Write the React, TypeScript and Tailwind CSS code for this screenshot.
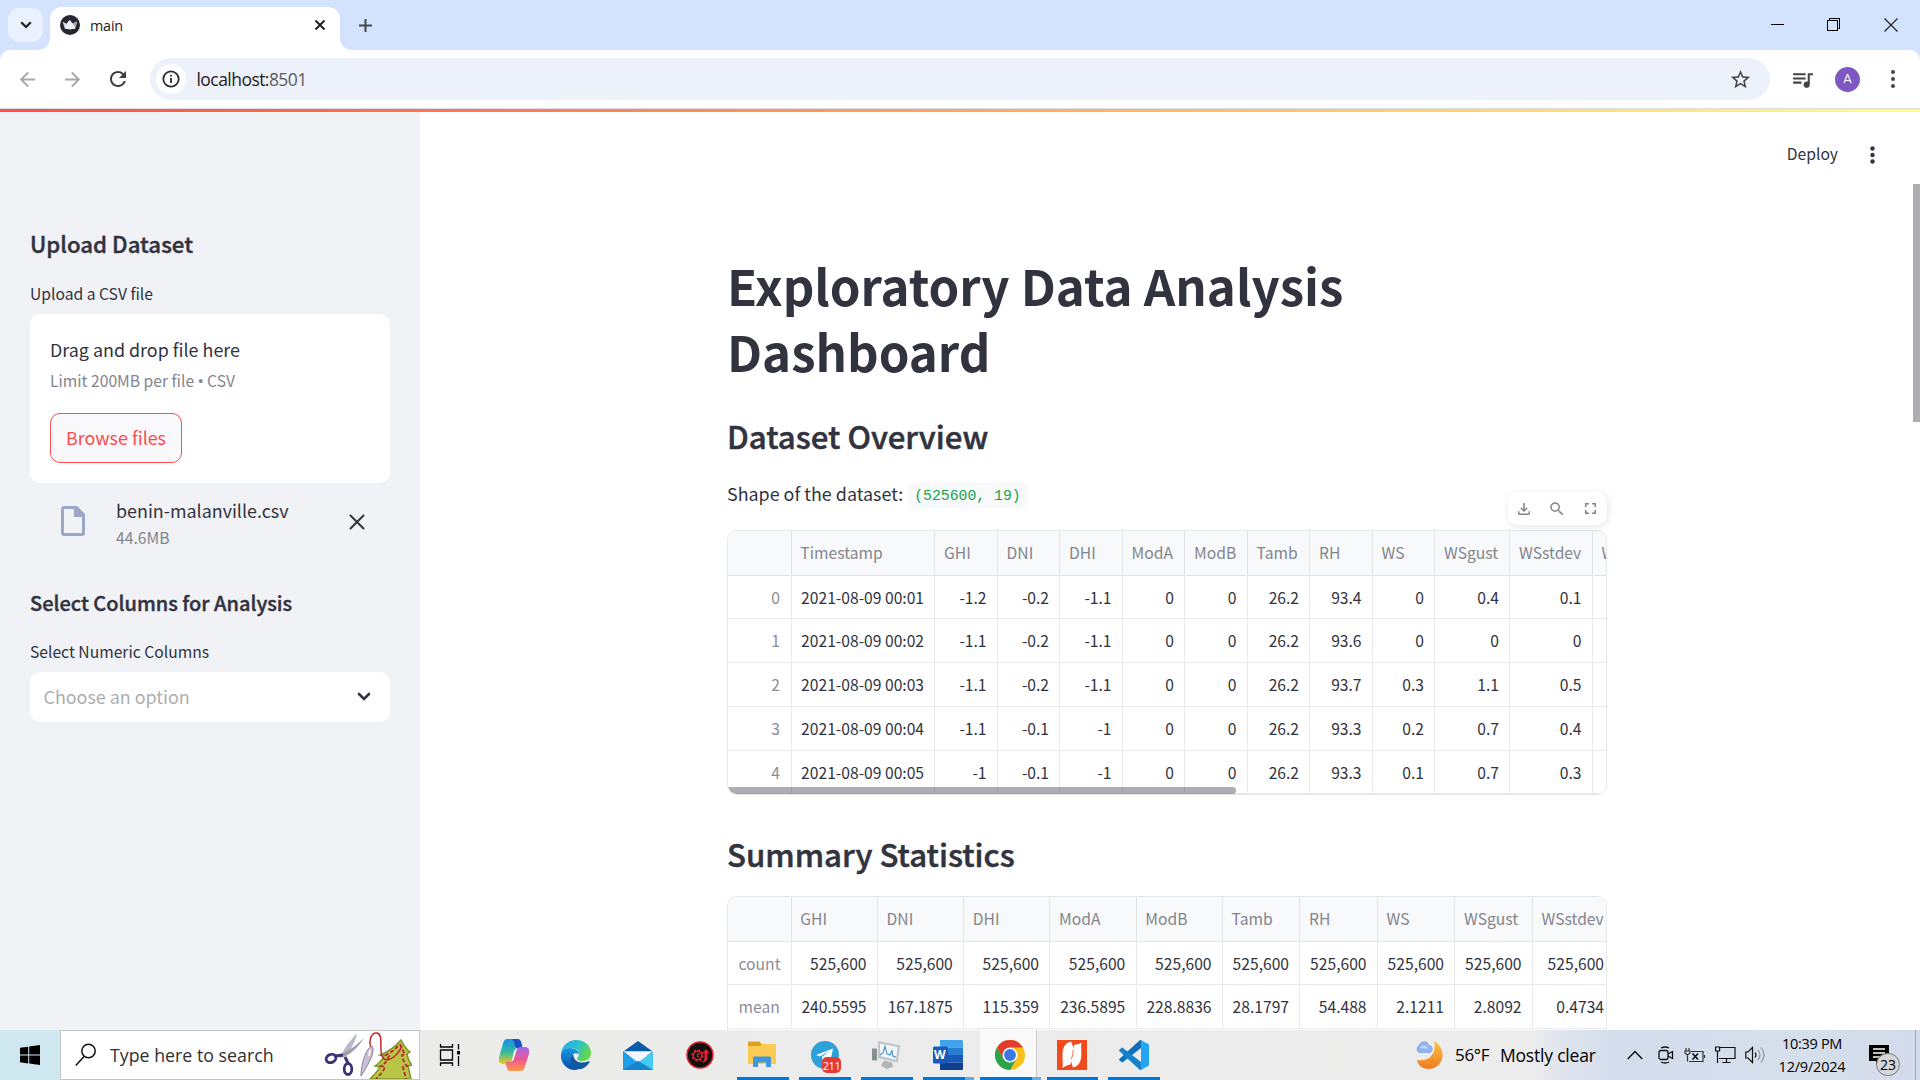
import React from "react";
import {
  MdArrowBack,
  MdArrowForward,
  MdRefresh,
  MdStarBorder,
  MdQueueMusic,
  MdOutlineFileDownload,
  MdSearch,
  MdFullscreen,
} from "react-icons/md";

type Col = { name: string; w: string };

const previewCols: Col[] = [
  { name: "Timestamp", w: "w-[143.75px]" },
  { name: "GHI", w: "w-[62.5px]" },
  { name: "DNI", w: "w-[62.5px]" },
  { name: "DHI", w: "w-[62.5px]" },
  { name: "ModA", w: "w-[62.5px]" },
  { name: "ModB", w: "w-[62.5px]" },
  { name: "Tamb", w: "w-[62.5px]" },
  { name: "RH", w: "w-[62.5px]" },
  { name: "WS", w: "w-[62.5px]" },
  { name: "WSgust", w: "w-[75px]" },
  { name: "WSstdev", w: "w-[82.5px]" },
  { name: "WD", w: "w-[62.5px]" },
];

const previewRows = [
  ["0", "2021-08-09 00:01", "-1.2", "-0.2", "-1.1", "0", "0", "26.2", "93.4", "0", "0.4", "0.1", ""],
  ["1", "2021-08-09 00:02", "-1.1", "-0.2", "-1.1", "0", "0", "26.2", "93.6", "0", "0", "0", ""],
  ["2", "2021-08-09 00:03", "-1.1", "-0.2", "-1.1", "0", "0", "26.2", "93.7", "0.3", "1.1", "0.5", ""],
  ["3", "2021-08-09 00:04", "-1.1", "-0.1", "-1", "0", "0", "26.2", "93.3", "0.2", "0.7", "0.4", ""],
  ["4", "2021-08-09 00:05", "-1", "-0.1", "-1", "0", "0", "26.2", "93.3", "0.1", "0.7", "0.3", ""],
];

const statCols: Col[] = [
  { name: "GHI", w: "w-[86.25px]" },
  { name: "DNI", w: "w-[86.25px]" },
  { name: "DHI", w: "w-[86.25px]" },
  { name: "ModA", w: "w-[86.25px]" },
  { name: "ModB", w: "w-[86.25px]" },
  { name: "Tamb", w: "w-[77.5px]" },
  { name: "RH", w: "w-[77.5px]" },
  { name: "WS", w: "w-[77.5px]" },
  { name: "WSgust", w: "w-[77.5px]" },
  { name: "WSstdev", w: "w-[82.5px]" },
];

const statRows = [
  ["count", "525,600", "525,600", "525,600", "525,600", "525,600", "525,600", "525,600", "525,600", "525,600", "525,600"],
  ["mean", "240.5595", "167.1875", "115.359", "236.5895", "228.8836", "28.1797", "54.488", "2.1211", "2.8092", "0.4734"],
];

function DataGrid({ cols, rows, indexAlign }: { cols: Col[]; rows: string[][]; indexAlign: string }) {
  return (
    <div className="text-[15.67px]">
      <div className="flex h-[44.5px] w-max border-b border-[#e3e4e8] bg-[#f8f9fb] text-[#83858d]">
        <div className="w-[63.5px] shrink-0 border-r border-[#e3e4e8]" />
        {cols.map((c) => (
          <div key={c.name} className={`${c.w} shrink-0 border-r border-[#e3e4e8] pl-[8.8px] leading-[44.5px]`}>
            {c.name}
          </div>
        ))}
      </div>
      {rows.map((r) => (
        <div key={r[0]} className="flex h-[43.75px] w-max border-b border-[#e8e9eb] text-[#31333f]">
          <div className={`w-[63.5px] shrink-0 border-r border-[#e8e9eb] leading-[43.2px] text-[#8b8d95] ${indexAlign}`}>
            {r[0]}
          </div>
          {cols.map((c, i) => (
            <div
              key={c.name}
              className={`${c.w} shrink-0 whitespace-nowrap border-r border-[#e8e9eb] pr-[10.2px] text-right leading-[43.2px]`}
            >
              {r[i + 1]}
            </div>
          ))}
        </div>
      ))}
    </div>
  );
}

function TabStrip() {
  return (
    <div className="flex h-[50px] bg-[#d3e3fd]">
      <div className="ml-2 mt-2 flex h-[34px] w-[35px] items-center justify-center rounded-[11px] bg-[#eaf1fe]">
        <svg width="12" height="8" viewBox="0 0 12 8" fill="none" stroke="#1f2023" strokeWidth="2.2">
          <path d="M1.2 1.2 6 6l4.800-4.800" />
        </svg>
      </div>
      <svg className="ml-[-5px] mt-[38px]" width="12" height="12" viewBox="0 0 12 12">
        <path d="M12 0v12H0C7 12 12 7 12 0Z" fill="#fff" />
      </svg>
      <div className="mt-[7px] flex h-[43px] w-[290px] items-center rounded-t-[12px] bg-white pb-[7px] pl-[10px]">
        <svg width="20" height="20" viewBox="0 0 20 20">
          <circle cx="10" cy="10" r="10" fill="#262730" />
          <path d="M2.600 6.800 6.800 8.800 9.600 5 12.600 8.400 17.200 6.400 15.200 13.600Q10 15 4.800 13.600Z" fill="#d8d8da" />
          <path d="M9.600 5 12.600 8.400 17.200 6.400 15.600 12Z" fill="#a9a9ad" />
          <path d="M6.800 8.800 9.600 5l3 3.800 2.600 4.800Q10 15 4.800 13.600Z" fill="#f1f1f1" />
        </svg>
        <span className="ml-[10px] pt-[2px] font-['Open_Sans','Noto_Sans',sans-serif] text-[14.4px] leading-5 tracking-[-0.2px] text-[#1f2023]">main</span>
        <svg className="ml-auto mr-[14px]" width="12" height="12" viewBox="0 0 12 12" stroke="#1f2023" strokeWidth="2">
          <path d="m1.500 1.500 9 9m0-9-9 9" />
        </svg>
      </div>
      <svg className="mt-[38px]" width="12" height="12" viewBox="0 0 12 12">
        <path d="M0 0v12h12C5 12 0 7 0 0Z" fill="#fff" />
      </svg>
      <svg className="ml-[7px] mt-[19px]" width="13" height="13" viewBox="0 0 13 13" stroke="#474747" strokeWidth="2">
        <path d="M6.500 0v13M0 6.500h13" />
      </svg>
      <div className="ml-auto mr-[22px] mt-[18px] flex gap-[43px]">
        <svg width="13" height="13" viewBox="0 0 13 13" stroke="#000" shapeRendering="crispEdges">
          <path d="M0 6.500h13" />
        </svg>
        <svg width="14" height="13" viewBox="0 0 14 13" fill="none" stroke="#000" shapeRendering="crispEdges">
          <path d="M.5 2.500h10v10H.5zM2.500 2V.5h10v10H11" />
        </svg>
        <svg width="14" height="14" viewBox="0 0 14 14" stroke="#222" strokeWidth="1.200">
          <path d="m.5.5 13 13m0-13-13 13" />
        </svg>
      </div>
    </div>
  );
}

function AddressBar() {
  return (
    <div className="h-[59px] bg-[#d3e3fd]">
      <div className="flex h-[59px] items-center rounded-t-[10px] border-b border-[#dbdfe2] bg-white">
        <MdArrowBack size={23} className="ml-[16px] text-[#a9a9a9]" />
        <MdArrowForward size={23} className="ml-[22px] text-[#a9a9a9]" />
        <MdRefresh size={24} className="ml-[21.5px] text-[#3c3d40]" />
        <div className="ml-[20.5px] flex h-[42px] w-[1620px] items-center rounded-full bg-[#ecf1fa] pl-[6px]">
          <div className="flex h-[30px] w-[30px] items-center justify-center rounded-full bg-white">
            <svg width="18" height="18" viewBox="0 0 18 18" fill="none" stroke="#2b2c2e" strokeWidth="1.800">
              <circle cx="9" cy="9" r="7.700" />
              <path d="M9 8v5M9 4.700v1.900" />
            </svg>
          </div>
          <span className="ml-[10.5px] font-['Open_Sans','Noto_Sans',sans-serif] text-[17.500px] leading-6 tracking-[-0.55px] text-[#1f2023]">
            localhost:<span className="text-[#5a5b5e]">8501</span>
          </span>
          <MdStarBorder size={23} className="ml-auto mr-[18.500px] text-[#444]" />
        </div>
        <MdQueueMusic size={25} className="ml-[20px] text-[#444]" />
        <div className="ml-[20px] flex h-[25px] w-[25px] items-center justify-center rounded-full bg-[#7e57c2] font-[Roboto,sans-serif] text-[13px] text-white">
          A
        </div>
        <svg className="ml-[31px]" width="4" height="18" viewBox="0 0 4 18" fill="#444">
          <circle cx="2" cy="2" r="2" />
          <circle cx="2" cy="9" r="2" />
          <circle cx="2" cy="16" r="2" />
        </svg>
      </div>
    </div>
  );
}

function Sidebar() {
  return (
    <aside className="flex w-[420px] shrink-0 flex-col bg-[#f0f2f6] px-[30px] text-[#31333f]">
      <h2 className="mt-[116px] text-[22.250px] font-medium leading-[30px] [-webkit-text-stroke:0.4px_#31333f]">Upload Dataset</h2>
      <div className="mt-[25.500px] text-[15.670px] leading-5">Upload a CSV file</div>
      <div className="mt-[10.500px] h-[169px] rounded-[10px] bg-white px-5 pt-5">
        <div className="text-[17.900px] leading-[30px]">Drag and drop file here</div>
        <div className="mt-[6.500px] text-[15.670px] leading-5 text-[#83858d]">
          Limit 200MB per file <span className="inline-block w-[6px] font-['Open_Sans',sans-serif] text-[17px] leading-none">•</span> CSV
        </div>
        <button className="mt-[22.500px] flex h-[50px] w-[132px] items-center justify-center rounded-[10px] border border-[#ff4b4b] bg-[#f9f9fb] pb-[2px] text-[17.900px] text-[#ff4b4b]">
          Browse files
        </button>
      </div>
      <div className="flex h-[105px] pl-[31px] pt-[12px]">
        <svg className="mt-[11px]" width="24" height="30" viewBox="0 0 24 30">
          <path d="M3 1.500h12.500l7 7V27a1.500 1.500 0 0 1-1.500 1.500H3A1.500 1.500 0 0 1 1.500 27V3A1.500 1.500 0 0 1 3 1.500Z" fill="none" stroke="#9aa8c7" strokeWidth="3" />
          <path d="M13 1h3l7 7v3H13Z" fill="#9aa8c7" />
        </svg>
        <div className="ml-[31px]">
          <div className="text-[17.900px] leading-[30px]">benin-malanville.csv</div>
          <div className="mt-[3px] text-[15.670px] leading-5 text-[#83858d]">44.6MB</div>
        </div>
        <svg className="ml-auto mr-[25px] mt-[19px]" width="16" height="16" viewBox="0 0 16 16" stroke="#31333f" strokeWidth="2" strokeLinecap="round">
          <path d="m1.500 1.500 13 13m0-13-13 13" />
        </svg>
      </div>
      <h3 className="text-[20px] font-medium leading-[30px] [-webkit-text-stroke:0.4px_#31333f]">Select Columns for Analysis</h3>
      <div className="mt-[24px] text-[15.670px] leading-5">Select Numeric Columns</div>
      <div className="mt-[10px] flex h-[50px] items-center rounded-[10px] bg-white pl-[13.500px] pr-[19px] text-[17.900px] text-[#adaeb2]">
        <span className="pb-[2px]">Choose an option</span>
        <svg className="ml-auto" width="14" height="10" viewBox="0 0 14 10" fill="none" stroke="#31333f" strokeWidth="2.600" strokeLinecap="round">
          <path d="m2 2 5 5 5-5" />
        </svg>
      </div>
    </aside>
  );
}

function GridToolbar() {
  return (
    <div className="absolute right-0 top-[-38px] flex h-[33px] w-[99px] items-center rounded-[10px] bg-white pl-[7px] text-[#83858d] shadow-[1px_2px_8px_rgba(0,0,0,0.1)]">
      <MdOutlineFileDownload size={18} />
      <MdSearch size={18} className="ml-[15px]" />
      <MdFullscreen size={19} className="ml-[14.500px]" />
    </div>
  );
}

function Main() {
  return (
    <main className="relative flex-1 overflow-hidden bg-white pl-[307px] text-[#31333f]">
      <div className="absolute right-[45px] top-[32px] flex items-center">
        <span className="text-[15.670px] leading-5">Deploy</span>
        <svg className="ml-[32px] mt-[2px]" width="5" height="18" viewBox="0 0 5 18" fill="#31333f">
          <circle cx="2.500" cy="2.500" r="2.200" />
          <circle cx="2.500" cy="9" r="2.200" />
          <circle cx="2.500" cy="15.500" r="2.200" />
        </svg>
      </div>
      <div className="absolute right-0 top-[72px] h-[238px] w-[7px] bg-[#adadb2]" />
      <div className="w-[880px]">
        <h1 className="w-[700px] pt-[140px] text-[49.200px] font-bold leading-[66px]">
          Exploratory Data Analysis Dashboard
        </h1>
        <h2 className="mt-[31px] text-[31.200px] font-medium leading-[42px] [-webkit-text-stroke:0.5px_#31333f]">Dataset Overview</h2>
        <div className="mt-[20px] flex h-[32px] items-center text-[17.900px] leading-[32px]">
          Shape of the dataset:
          <code className="ml-[5px] mt-[5px] h-[25px] rounded-[5px] bg-[#f8f9fb] pl-[6px] pr-[7px] font-['Liberation_Mono',monospace] text-[14.800px] leading-[26px] text-[#17a34a]">
            (525600, 19)
          </code>
        </div>
        <div className="relative mt-[21px]">
          <div className="relative h-[265px] overflow-hidden rounded-[10px] border border-[#e6e7ea]">
            <DataGrid cols={previewCols} rows={previewRows} indexAlign="text-right pr-[10.500px]" />
            <div className="absolute bottom-0 left-0 h-[7px] w-[508px] rounded-r-full bg-[#31333f]/40" />
          </div>
          <GridToolbar />
        </div>
        <h2 className="mt-[38px] text-[31.200px] font-medium leading-[42px] [-webkit-text-stroke:0.5px_#31333f]">Summary Statistics</h2>
        <div className="mt-[21px] h-[400px] overflow-hidden rounded-[10px] border border-[#e6e7ea]">
          <DataGrid cols={statCols} rows={statRows} indexAlign="pl-[10.500px]" />
        </div>
      </div>
    </main>
  );
}

function TaskItem({
  w,
  line,
  active,
  extra,
  children,
}: {
  w: string;
  line?: boolean;
  active?: boolean;
  extra?: boolean;
  children: React.ReactNode;
}) {
  return (
    <div className={`relative flex h-full shrink-0 items-center justify-center ${w} ${active ? "border-r border-[#c9c9c9] bg-[#f9f9f9]" : ""}`}>
      {children}
      {line && (
        <div className={`absolute bottom-0 flex h-[3px] ${active ? "left-0 right-[-5px]" : "left-[5px] right-[5px]"}`}>
          <div className="flex-1 bg-[#0078d7]" />
          {extra && <div className="w-[9px] bg-[#68abe3]" />}
        </div>
      )}
    </div>
  );
}

function Taskbar() {
  return (
    <footer className="flex h-[50px] w-full bg-[linear-gradient(90deg,#ebebea_0px,#ececec_1530px,#dfe4ee_1565px,#d2dceb_1620px,#d6dfec_1800px,#d3dbea_1920px)] font-['Open_Sans','Noto_Sans',sans-serif] text-black">
      <div className="flex w-[60px] items-center justify-center bg-[#cfe7ee]">
        <svg width="20" height="20" viewBox="0 0 20 20">
          <path d="M0 2.800 8.200 1.700V9.500H0zM9.200 1.500 20 0v9.500H9.200zM0 10.500h8.200v7.900L0 17.200zM9.200 10.500H20V20L9.200 18.500z" />
        </svg>
      </div>
      <div className="flex w-[360px] items-center overflow-hidden border border-[#c3c4c8] bg-white pl-[14px]">
        <svg width="21" height="24" viewBox="0 0 21 24" fill="none" stroke="#111" strokeWidth="1.500">
          <circle cx="13.500" cy="8" r="6.700" />
          <path d="M9.200 13.200.8 22.500" />
        </svg>
        <span className="ml-[14px] whitespace-nowrap text-[17.800px] text-[#303030]">Type here to search</span>
        <svg className="ml-auto mr-[7px] shrink-0" width="88" height="48" viewBox="0 0 88 48" fill="none">
          <path d="M33 2c-1 8-7 18-12 24l-3-3C21 15 28 8 33 2Z" fill="#b9b9c6" />
          <path d="M40 7C34 17 25 25 16 27l1-4C25 20 34 13 40 7Z" fill="#9d9dab" />
          <path d="M19 24 11 25M21 26l3 6" stroke="#3b3474" strokeWidth="3" />
          <ellipse cx="7" cy="27.500" rx="5" ry="4" transform="rotate(-25 7 27.500)" stroke="#3b3474" strokeWidth="2.800" />
          <ellipse cx="24" cy="38" rx="3.800" ry="5.500" stroke="#3b3474" strokeWidth="2.800" />
          <path d="M77 9c3 6 5 9 9 12l-3 2c1 5 2 8 5 11l-4 1 3 13H46c4-4 8-8 10-12l-5-1c5-3 7-6 9-10l-4-1c8-3 15-8 21-15Z" fill="#b9c546" stroke="#7d9423" strokeWidth="1.500" />
          <path d="M76 13c2 5 3 7 5 10l-3 1c1 5 2 8 5 11l-4 1 3 12M74 15c-4 4-8 7-12 9l3 1c-2 5-4 8-8 10l4 1c-2 5-6 9-9 12" stroke="#b8252b" strokeWidth="1.800" strokeDasharray="4 2" />
          <path d="M47 17C44 9 48 1 53 2c8 2 0 20 7 26 6 3 14-4 18-13" stroke="#c2272d" strokeWidth="1.500" />
          <path d="M48 15c3 4 0 13-11 30 0-12 5-28 11-30Z" fill="#cbbfd2" stroke="#91809f" strokeWidth="1" />
          <path d="m46 19-1 6" stroke="#fff" strokeWidth="1.500" />
        </svg>
      </div>
      <div className="flex w-[60px] items-center justify-center">
        <svg width="22" height="22" viewBox="0 0 22 22" fill="none" stroke="#000" strokeWidth="1.300">
          <path d="M1.500 6h12v10h-12zM1.500 0v3h12V0M1.500 22v-3h12v3M19.500 0v5.500M19.500 12v10" />
          <path d="M18 7h3v3.500h-3z" fill="#000" stroke="none" />
        </svg>
      </div>
      <TaskItem w="w-[67px]">
        <svg width="30" height="32" viewBox="0 0 30 28" preserveAspectRatio="none">
          <defs>
            <linearGradient id="cpa" x1="0" y1="0" x2="0" y2="1"><stop stopColor="#1a8fe8" /><stop offset=".5" stopColor="#2fb8a4" /><stop offset="1" stopColor="#f3cd1e" /></linearGradient>
            <linearGradient id="cpb" x1="0" y1="0" x2="0" y2="1"><stop stopColor="#a566ed" /><stop offset=".5" stopColor="#ec5594" /><stop offset="1" stopColor="#ff9a48" /></linearGradient>
          </defs>
          <path d="M9 0h10c2 0 3 2 3.500 4l1 4h-5c-2 0-3 1-4 4l-2 8c-.7 2-2 2-4 2H4c-3 0-5-2-4-6L4 4C5 1 6 0 9 0Z" fill="url(#cpa)" />
          <path d="M16 0h3c2 0 3 2 3.500 4l1 4h-5c-2 0-2.500-2-3-4-.4-1.500-1-3-2.500-4Z" fill="#1b4fc4" />
          <path d="M21 28H11c-2 0-3-2-3.500-4l-1-4h5c2 0 3-1 4-4l2-6c.7-2 2-3 4-3h4.500c3 0 5 2 4 6l-4 11c-1 3-2 4-5 4Z" fill="url(#cpb)" />
        </svg>
      </TaskItem>
      <TaskItem w="w-[57px]">
        <svg width="30" height="30" viewBox="0 0 30 30">
          <defs>
            <linearGradient id="eda" x1="0" y1="0" x2="1" y2=".4"><stop stopColor="#2aa6e8" /><stop offset=".6" stopColor="#2cc3c8" /><stop offset="1" stopColor="#64d64b" /></linearGradient>
            <linearGradient id="edb" x1="0" y1="0" x2="0" y2="1"><stop stopColor="#1599e3" /><stop offset="1" stopColor="#0b4fa6" /></linearGradient>
          </defs>
          <path d="M0 14C1 5 8 0 15 0c9 0 15 6 15 13 0 5-4 8-9 8-3 0-5-1-5-2 0-1 2-2 2-5C18 10 14 8 10 8 5 8 1 10 0 14Z" fill="url(#eda)" />
          <path d="M0 14c1-4 5-6 9-6 5 0 9 3 9 6-5-2-8 1-8 5 0 5 4 9 10 9-2 1-4 2-6 2C6 30-1 23 0 14Z" fill="url(#edb)" />
          <path d="M12 14c-5 5-2 15 8 15 4-1 7-4 8.500-7 .4-.8-.3-1-1-.7C21 24 13 23 12 14Z" fill="#11589e" />
        </svg>
      </TaskItem>
      <TaskItem w="w-[67px]">
        <svg width="30" height="29" viewBox="0 0 30 27" preserveAspectRatio="none">
          <path d="M0 10 15 0l15 10v4H0Z" fill="#0a5ba8" />
          <path d="M0 9.500h30L15 20Z" fill="#f3f6fa" />
          <path d="M0 9.500v17.500h30L15 20Z" fill="#1f9fe8" />
          <path d="M30 9.500V27L13 19l2 1Z" fill="#45cbf2" />
          <path d="M0 27 15 18.500 30 27Z" fill="#1583cf" />
        </svg>
      </TaskItem>
      <TaskItem w="w-[57px]">
        <svg width="28" height="28" viewBox="0 0 28 28">
          <circle cx="14" cy="14" r="13" fill="#111" stroke="#e4222b" strokeWidth="1.500" />
          <circle cx="11.500" cy="14.500" r="4.200" fill="none" stroke="#e4222b" strokeWidth="1.400" />
          <circle cx="11.500" cy="14.500" r="5.400" fill="none" stroke="#e4222b" strokeWidth="1.500" strokeDasharray="2.100 2.140" />
          <path d="M11 13h3M11.500 13v3h2" fill="none" stroke="#e4222b" />
          <path d="m16.500 12 3.500-4 3.500 4h-2v5c0 2.500-2.500 4.500-6 4.500 2-1.500 3-2.500 3-4.500v-5Z" fill="#e4222b" />
        </svg>
      </TaskItem>
      <TaskItem w="w-[62px] ml-[4px] pr-[2px]" line>
        <svg width="28" height="28" viewBox="0 0 28 28">
          <path d="M0 2c0-1 .5-1.500 1.500-1.500h10l2.500 3V7H0Z" fill="#dea11a" />
          <path d="M0 5h12l2-2h12.500c1 0 1.500.5 1.500 1.500V23H0Z" fill="#fccb54" />
          <path d="M5 26V17c0-1 .5-1.500 1.500-1.500h15c1 0 1.500.5 1.500 1.500v9h-5v-4.500h-8V26Z" fill="#3f97dd" />
        </svg>
      </TaskItem>
      <TaskItem w="w-[62px]" line>
        <svg width="28" height="28" viewBox="0 0 28 28">
          <circle cx="14" cy="14" r="14" fill="#2ca0d8" />
          <path d="M5 14 22 7.500 19 22l-4.500-3.500-2.500 2-1-4.500 7-6-9 5.500Z" fill="#fff" />
        </svg>
        <div className="absolute left-[28px] top-[27px] flex h-[16px] w-[19px] items-center justify-center rounded-[5px] bg-[#e53935] text-[11px] leading-none tracking-[-0.5px] text-white">
          211
        </div>
      </TaskItem>
      <TaskItem w="w-[62px] pr-[2px]" line>
        <svg width="28" height="28" viewBox="0 0 28 26" preserveAspectRatio="none">
          <path d="M0 7h5v11H0Z" fill="#8c8f92" />
          <path d="M1 13h3v2H1Z" fill="#43b649" />
          <path d="m6 0 22 4-2 16L6 16Z" fill="#c3c6c9" />
          <path d="m8 2.500 17.500 3-1.500 12L8 14Z" fill="#eff7fc" />
          <path d="m8 13 3-2 2-6 2 7 3 1 2-4 1 5 3 1" fill="none" stroke="#3f86bb" />
          <path d="m12 18 8 2 1 4-6 2-6-3Z" fill="#b2b5b8" />
        </svg>
      </TaskItem>
      <TaskItem w="w-[61px] pr-[2px]" line extra>
        <svg width="30" height="30" viewBox="0 0 30 28" preserveAspectRatio="none">
          <path d="M7 0h21.500c1 0 1.500.5 1.500 1.500V7H7Z" fill="#41a5ee" />
          <path d="M7 7h23v7H7Z" fill="#2b7cd3" />
          <path d="M7 14h23v7H7Z" fill="#185abd" />
          <path d="M7 21h23v5.500c0 1-.5 1.500-1.500 1.500H7Z" fill="#103f91" />
          <rect y="6" width="15" height="16" rx="1.500" fill="#185abd" />
        </svg>
        <span className="absolute left-[16px] top-[18px] font-['Open_Sans',sans-serif] text-[12px] font-bold leading-[14px] text-white">W</span>
      </TaskItem>
      <TaskItem w="w-[57px] ml-[1px] pl-[3px]" line active extra>
        <svg width="30" height="30" viewBox="0 0 48 48">
          <circle cx="24" cy="24" r="24" fill="#fbc116" />
          <path d="M24 12h20.800A24 24 0 0 0 3.200 12L13.600 30Z" fill="#e33b2e" />
          <path d="M3.200 12A24 24 0 0 0 24 48L34.400 30 24 34 13.600 30Z" fill="#2ba24c" />
          <circle cx="24" cy="24" r="12" fill="#fff" />
          <circle cx="24" cy="24" r="9.500" fill="#3b78e7" />
        </svg>
      </TaskItem>
      <TaskItem w="w-[61px] ml-[5px] pr-[2px]" line>
        <svg width="30" height="30" viewBox="0 0 30 30">
          <path d="M0 0h30v30H0Z" fill="#f04a1d" />
          <path d="M5.500 28C6.500 21 4 13 7 7c1.500-3 4-5 7-5.500C16 6 18 11 17.500 15c-.5 3-3.500 4-4 9.500-3 .5-5.500 1.500-8 3.500Z" fill="#fff" />
          <path d="M24.500 2.500c-1 7 1 14-1.500 19.500-1.500 3-4 5-7 5.500-1.500-4-3-9-2.500-13 .5-3 3-4.500 3.500-9.500 3-.5 5-1 7.500-2.500Z" fill="#fff" />
          <path d="M16 10c.5 4-.5 6-1.800 9" fill="none" stroke="#f04a1d" strokeWidth=".8" />
        </svg>
      </TaskItem>
      <TaskItem w="w-[62px]" line>
        <svg width="30" height="30" viewBox="0 0 30 30">
          <path d="m22 8-18 14c-.5.500-1 .5-1.500 0L.6 20.500c-.6-.5-.6-1.200 0-1.700L21 0l3 1Z" fill="#0e70b8" />
          <path d="M22 22 4 8c-.5-.5-1-.5-1.500 0L.6 9.500c-.6.500-.6 1.200 0 1.700L21 30l3-1Z" fill="#1483cc" />
          <path d="m21 0 7.500 3.500c1 .5 1.500 1 1.500 2v19c0 1-.5 1.500-1.500 2L21 30c.7-.5 1-1 1-2V2c0-1-.3-1.500-1-2Z" fill="#25a5f3" />
        </svg>
      </TaskItem>
      <div className="ml-auto flex items-center">
        <svg width="30" height="30" viewBox="0 0 30 30">
          <defs>
            <linearGradient id="moon" x1="0" y1="0" x2="0" y2="1"><stop stopColor="#fcc53b" /><stop offset="1" stopColor="#ee7a24" /></linearGradient>
          </defs>
          <path d="M20 1c13 7 11 27-5 28C9 29 4 26 3 20c13 2 20-7 17-19Z" fill="url(#moon)" />
          <path d="M5 13a4.500 4.500 0 0 1 0-8c2-5 9-5 10 0 5 0 5 8 0 8Z" fill="#8fb2ec" />
          <path d="M6 8c2-4 7-3 8 1-3-1-5 0-8-1Z" fill="#c3d8fa" />
        </svg>
        <span className="ml-[11px] w-[45px] whitespace-nowrap text-[17px] tracking-[-0.3px]">56°F</span>
        <span className="w-[127px] whitespace-nowrap text-[17.500px] tracking-[-0.2px]">Mostly clear</span>
        <svg width="16" height="10" viewBox="0 0 16 10" fill="none" stroke="#111" strokeWidth="1.500">
          <path d="m.7 9 7.300-7.500L15.300 9" />
        </svg>
        <svg className="ml-[15px]" width="16" height="18" viewBox="0 0 16 18" fill="none" stroke="#111" strokeWidth="1.300">
          <rect x="1" y="4.500" width="9" height="9" rx="2" />
          <path d="m10 8 4.500-2.500v7L10 10M3 2q4-2 8 0M3 16q4 2 8 0" />
        </svg>
        <svg className="ml-[10px]" width="22" height="15" viewBox="0 0 22 15" fill="none" stroke="#111" strokeWidth="1.200">
          <path d="M2 0v3M5 0v3M1 3h5v2L3.500 7 1 5ZM3.500 7v6.500M7 3.500h12v10H5M20.500 7v3" stroke="#333" />
          <path d="m8.500 5.500 5.500 6m0-6-5.500 6" strokeWidth="1.600" />
        </svg>
        <svg className="ml-[9px]" width="21" height="18" viewBox="0 0 21 18" fill="none" stroke="#111" strokeWidth="1.200">
          <path d="M5 1.500h15v11H4M11.500 12.500V16M7.500 16.500h8M.6 1h4v4h-4ZM2.500 5v12" />
        </svg>
        <svg className="ml-[9px]" width="21" height="18" viewBox="0 0 21 18" fill="none" stroke="#111" strokeWidth="1.200">
          <path d="M.8 6H3l4.500-4.500v15L3 12H.8Z" />
          <path d="M10 6.500q2 2.500 0 5" />
          <path d="M13 4q4 5 0 10M16 1.500q6 7.500 0 15" stroke="#8b929c" />
        </svg>
        <div className="ml-[11px] flex w-[70px] flex-col items-center text-[14.500px] leading-[23.500px]">
          <span className="whitespace-nowrap tracking-[-0.3px]">10:39 PM</span>
          <span className="whitespace-nowrap tracking-[-0.2px]">12/9/2024</span>
        </div>
        <div className="relative ml-[22px] h-[50px] w-[46px]">
          <svg className="mt-[15px]" width="20" height="20" viewBox="0 0 20 20">
            <path d="M0 0h20v16h-8l-5 4v-4H0Z" />
            <path d="M4 4h12M4 8h12M4 12h8" stroke="#fff" strokeWidth="1.300" />
          </svg>
          <div className="absolute left-[7px] top-[23px] flex h-[23px] w-[24px] items-center justify-center rounded-full border border-[#777] bg-[#d4d6d9] text-[14px] font-medium leading-none">
            23
          </div>
        </div>
        <div className="h-[50px] w-[5px] border-l border-[#a4abb8]" />
      </div>
    </footer>
  );
}

export default function App() {
  return (
    <div className="flex h-[1080px] w-[1920px] flex-col overflow-hidden bg-white font-['Noto_Sans_CJK_SC',sans-serif]">
      <TabStrip />
      <AddressBar />
      <div className="h-[3px] shrink-0 bg-[linear-gradient(90deg,#ff4b4b,#fffd80)]" />
      <div className="flex h-[918px] shrink-0">
        <Sidebar />
        <Main />
      </div>
      <Taskbar />
    </div>
  );
}
